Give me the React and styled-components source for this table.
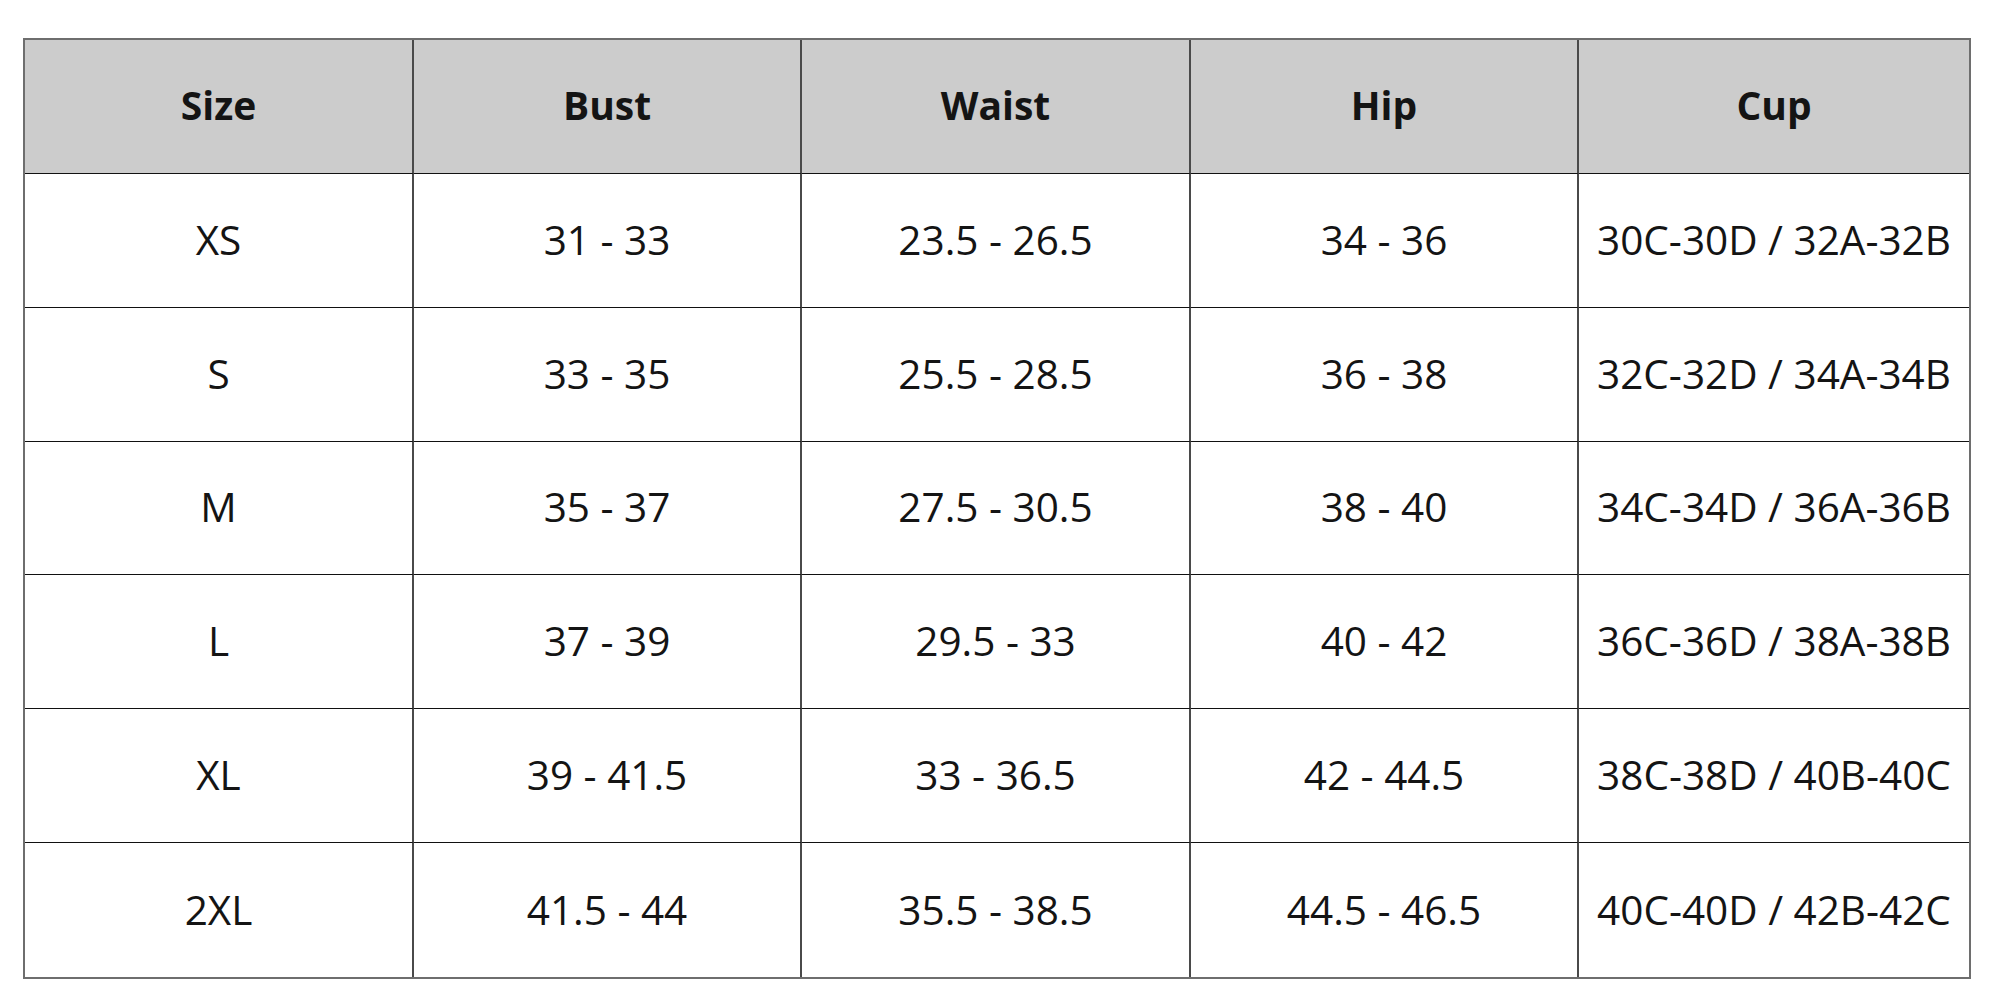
import { styled, createGlobalStyle } from "styled-components";

const GlobalStyle = createGlobalStyle`
	body {
		margin: 0;
		background: #ffffff;
		font-family: "Open Sans", "Liberation Sans", sans-serif;
	}
`;

const headers = ["Size", "Bust", "Waist", "Hip", "Cup"];

const rows = [
	["XS", "31 - 33", "23.5 - 26.5", "34 - 36", "30C-30D / 32A-32B"],
	["S", "33 - 35", "25.5 - 28.5", "36 - 38", "32C-32D / 34A-34B"],
	["M", "35 - 37", "27.5 - 30.5", "38 - 40", "34C-34D / 36A-36B"],
	["L", "37 - 39", "29.5 - 33", "40 - 42", "36C-36D / 38A-38B"],
	["XL", "39 - 41.5", "33 - 36.5", "42 - 44.5", "38C-38D / 40B-40C"],
	["2XL", "41.5 - 44", "35.5 - 38.5", "44.5 - 46.5", "40C-40D / 42B-42C"],
];

export default function App() {
	return (
		<Page>
			<GlobalStyle />
			<Chart>
				{headers.map((h, i) => (
					<HeadCell key={h} $last={i === headers.length - 1}>
						{h}
					</HeadCell>
				))}
				{rows.map((row, r) =>
					row.map((value, c) => (
						<Cell
							key={`${r}-${c}`}
							$last={c === row.length - 1}
							$bottom={r === rows.length - 1}
						>
							{value}
						</Cell>
					))
				)}
			</Chart>
		</Page>
	);
}

const Page = styled.div`
	padding: 38px 0 0 23px;
	width: 2000px;
	height: 1000px;
	box-sizing: border-box;
`;

const Chart = styled.div`
	display: grid;
	grid-template-columns: 389px 388px 389px 388px 1fr;
	grid-template-rows: repeat(7, 1fr);
	width: 1948px;
	height: 941px;
	box-sizing: border-box;
	border: 2px solid #6e6e6e;
`;

const BaseCell = styled.div`
	display: flex;
	align-items: center;
	justify-content: center;
	box-sizing: border-box;
	color: #141414;
	white-space: nowrap;
	border-right: ${(p) => (p.$last ? "none" : "2px solid #4a4a4a")};
`;

const HeadCell = styled(BaseCell)`
	background: #cccccc;
	font-size: 39px;
	font-weight: 700;
	padding-bottom: 4px;
	border-bottom: 1px solid #111111;
`;

const Cell = styled(BaseCell)`
	font-size: 40.5px;
	font-weight: 400;
	padding-bottom: 2px;
	border-bottom: ${(p) => (p.$bottom ? "none" : "1px solid #111111")};
`;
